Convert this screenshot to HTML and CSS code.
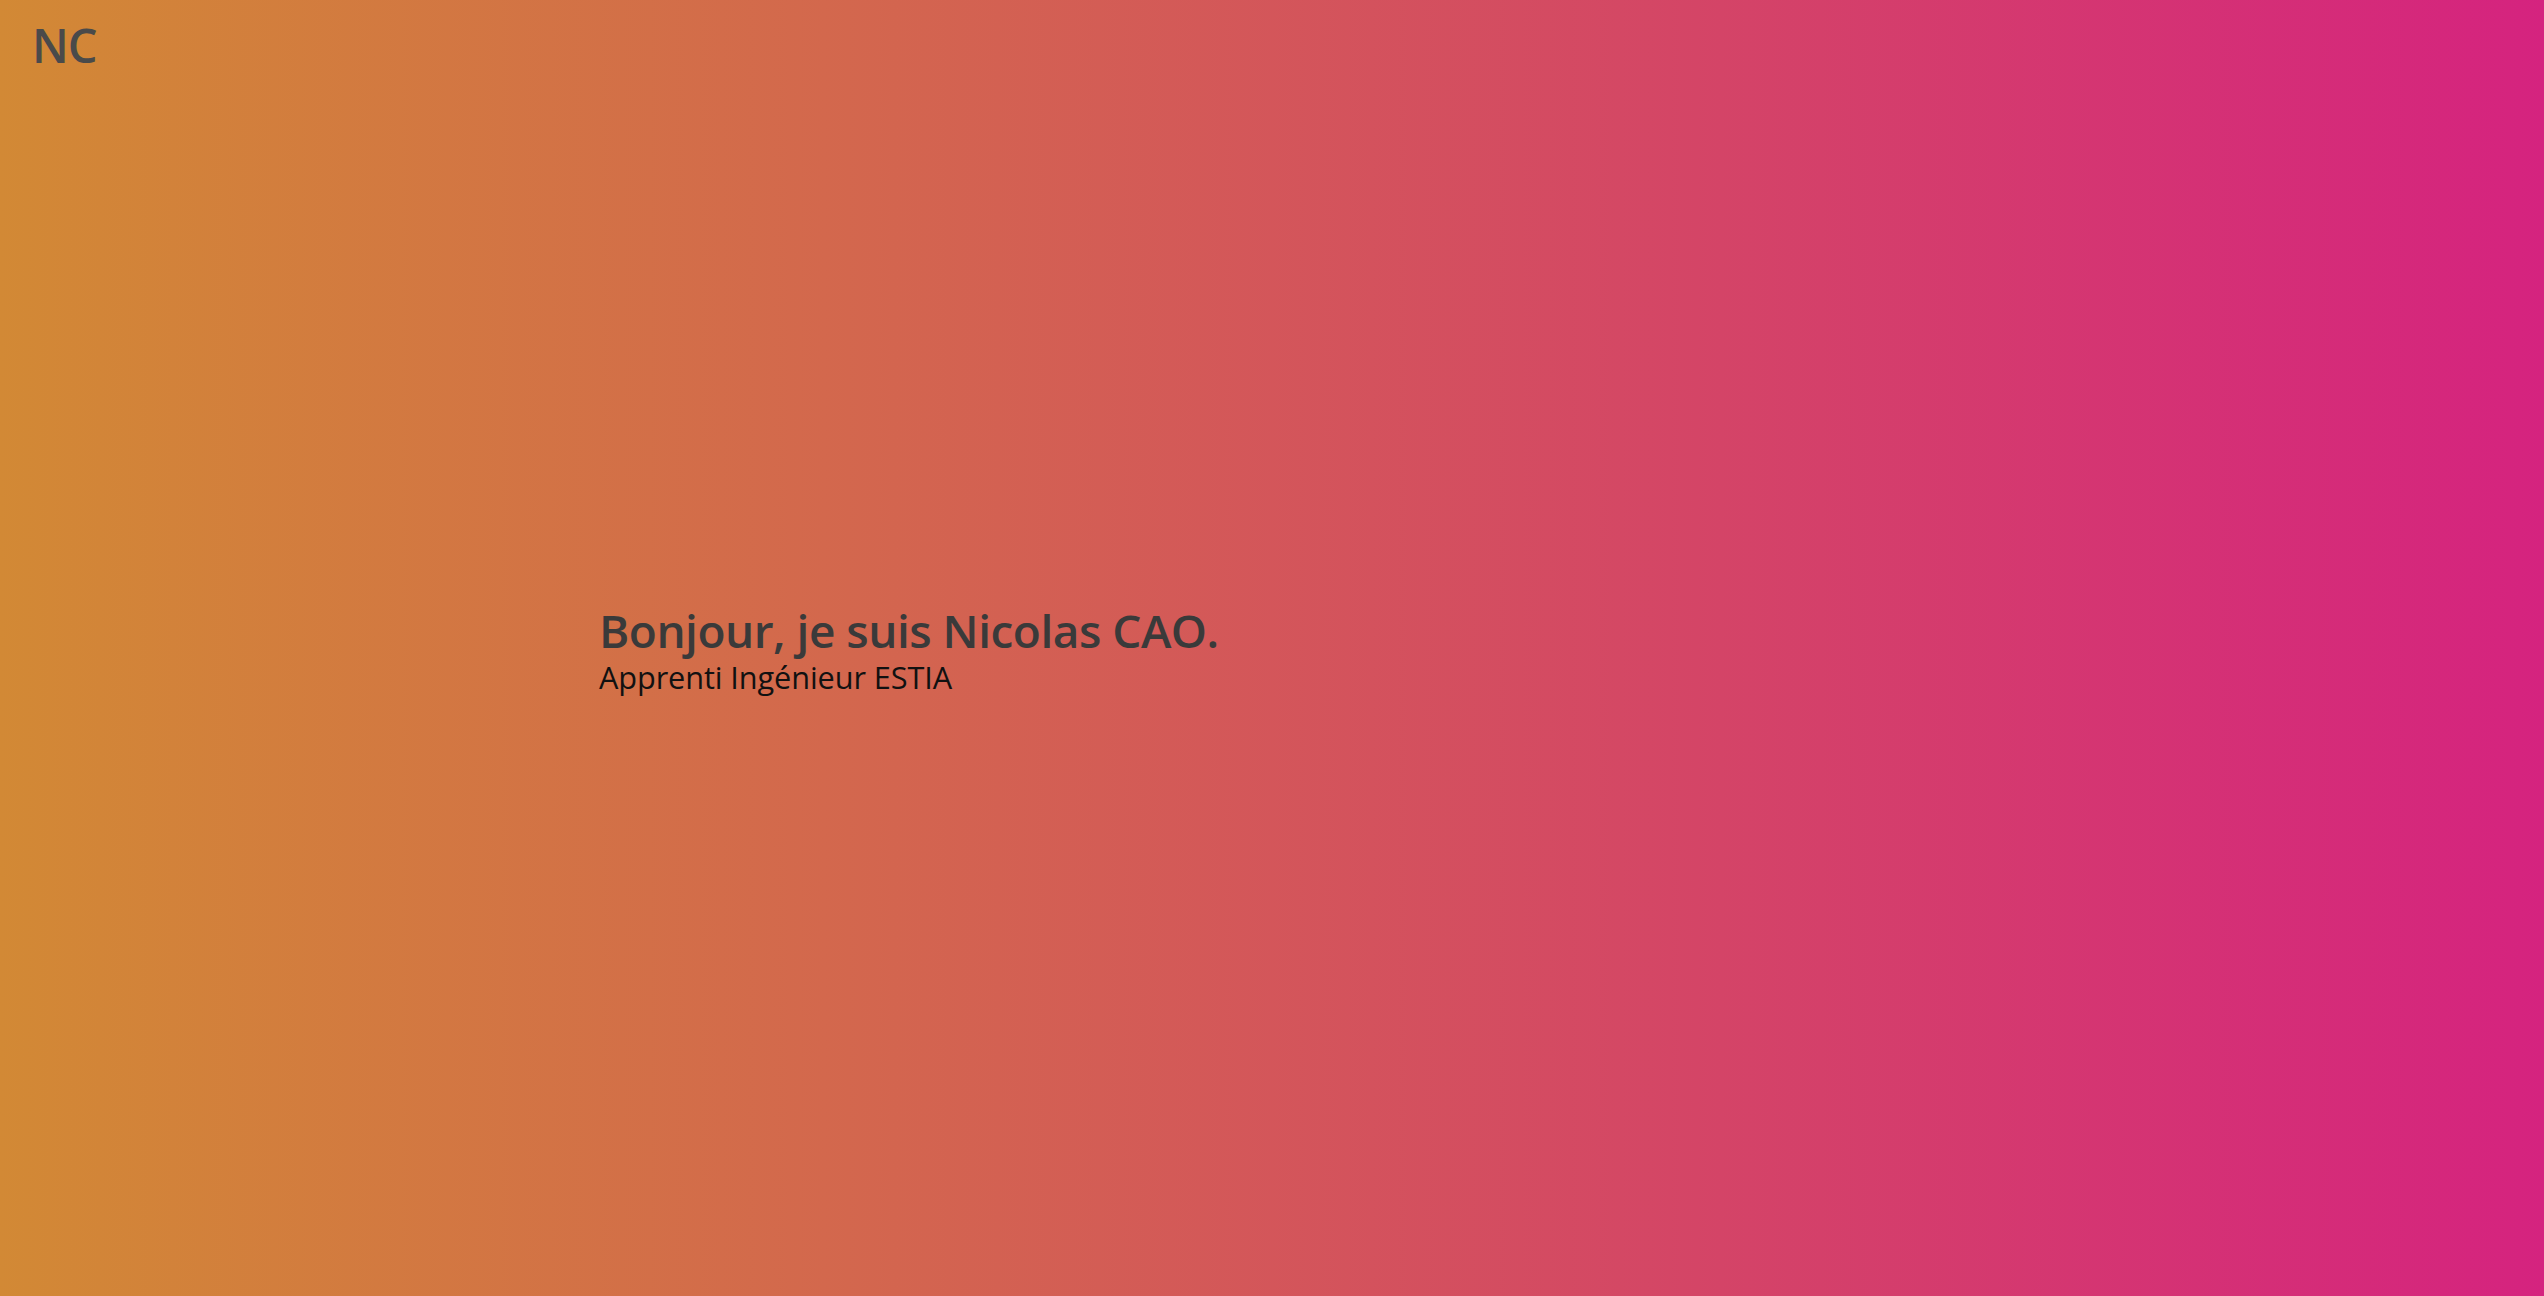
FILE: index.html
```html
<!DOCTYPE html>
<html lang="fr">
<head>
<meta charset="utf-8">
<title>Nicolas CAO</title>
<link rel="stylesheet" href="styles.css">
</head>
<body>
<header class="topbar"><span class="logo">NC</span></header>
<main class="hero">
  <div class="hero-text">
    <h1 class="title">Bonjour, je suis Nicolas CAO.</h1>
    <p class="subtitle">Apprenti Ingénieur ESTIA</p>
  </div>
</main>
</body>
</html>
```
FILE: styles.css
```css
html, body {
  margin: 0;
  padding: 0;
  height: 100%;
}
body {
  font-family: "Open Sans", "Noto Sans", sans-serif;
  background: linear-gradient(to right, #d28935, #d5237f);
  overflow: hidden;
  position: relative;
}
.topbar {
  position: absolute;
  top: 0;
  left: 0;
  padding: 13px 32px;
}
.logo {
  font-size: 47px;
  font-weight: 600;
  color: #4a4a4a;
  letter-spacing: -1px;
}
.hero {
  height: 100vh;
  display: flex;
  align-items: center;
  padding-left: 599px;
  box-sizing: border-box;
}
.hero-text {
  margin-top: 4px;
}
.title {
  margin: 0;
  font-size: 46px;
  font-weight: 600;
  color: #3a3a3a;
  letter-spacing: -0.5px;
  line-height: 1.2;
}
.subtitle {
  margin: 0;
  font-size: 30.7px;
  color: #111;
  line-height: 1.25;
  letter-spacing: -0.1px;
}
```
